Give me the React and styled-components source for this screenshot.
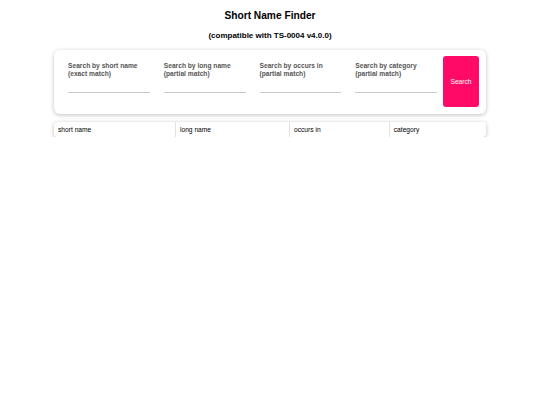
import React from "react";
import styled, { createGlobalStyle } from "styled-components";

const GlobalStyle = createGlobalStyle`
  html, body {
    margin: 0;
    padding: 0;
    background: #ffffff;
    font-family: "Liberation Sans", Arial, sans-serif;
  }
`;

const Page = styled.div`
  width: 432px;
  margin: 0 auto;
  padding-top: 10px;
`;

const Title = styled.h1`
  margin: 0;
  font-size: 10.2px;
  line-height: 12px;
  font-weight: bold;
  text-align: center;
  color: #000;
`;

const Subtitle = styled.h2`
  margin: 9px 0 0;
  font-size: 8px;
  line-height: 10px;
  font-weight: bold;
  text-align: center;
  color: #000;
`;

const Card = styled.div`
  display: flex;
  margin-top: 9px;
  padding: 6px 7px 7px 14px;
  background: #fff;
  border-radius: 6px;
  box-shadow: 0 1px 4px rgba(0, 0, 0, 0.25);
`;

const Field = styled.div`
  flex: 1 1 0;
  min-width: 0;
  display: flex;
  flex-direction: column;
  padding-top: 6px;
  margin-right: ${(p) => (p.last ? "6px" : "14px")};
`;

const Label = styled.label`
  font-size: 6.67px;
  line-height: 7.5px;
  font-weight: bold;
  color: #555;
`;

const Input = styled.input`
  width: 100%;
  min-width: 0;
  box-sizing: border-box;
  height: 16px;
  padding: 0;
  border: none;
  border-bottom: 1px solid #c8c8c8;
  outline: none;
  background: transparent;
  font-family: inherit;
  font-size: 6.67px;
`;

const SearchButton = styled.button`
  flex: 0 0 36px;
  width: 36px;
  height: 51px;
  border: none;
  border-radius: 3px;
  background: #ff0a66;
  color: #fff;
  font-family: inherit;
  font-size: 6.67px;
  cursor: pointer;
  padding: 0;
`;

const Table = styled.table`
  width: 100%;
  margin-top: 8px;
  border-collapse: separate;
  border-spacing: 0;
  border-radius: 4px;
  box-shadow: 0 1px 4px rgba(0, 0, 0, 0.28);
  overflow: hidden;
`;

const Th = styled.th`
  width: ${(p) => p.w};
  height: 15px;
  padding: 0 4px;
  text-align: left;
  font-weight: normal;
  font-size: 6.67px;
  color: #000;
  border-left: ${(p) => (p.first ? "none" : "1px solid #e2e2e2")};
`;

const fields = [
  ["Search by short name", "(exact match)"],
  ["Search by long name", "(partial match)"],
  ["Search by occurs in", "(partial match)"],
  ["Search by category", "(partial match)"],
];

const App = () => {
  return (
    <>
      <GlobalStyle />
      <Page>
        <Title>Short Name Finder</Title>
        <Subtitle>(compatible with TS-0004 v4.0.0)</Subtitle>
        <Card>
          {fields.map(([a, b], i) => (
            <Field key={a} last={i === fields.length - 1}>
              <Label>
                {a}
                <br />
                {b}
              </Label>
              <Input type="text" />
            </Field>
          ))}
          <SearchButton>Search</SearchButton>
        </Card>
        <Table>
          <thead>
            <tr>
              <Th first w="28%">short name</Th>
              <Th w="26.4%">long name</Th>
              <Th w="23.1%">occurs in</Th>
              <Th w="22.5%">category</Th>
            </tr>
          </thead>
        </Table>
      </Page>
    </>
  );
};

export default App;
